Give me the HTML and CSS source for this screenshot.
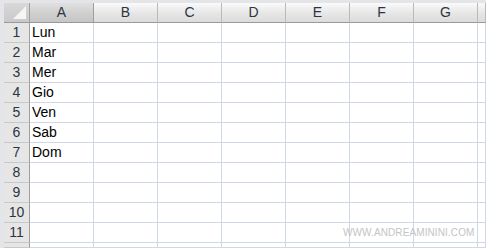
FILE: index.html
```html
<!DOCTYPE html>
<html lang="en">
<head>
  <meta charset="UTF-8">
  <title>Foglio</title>
  <link rel="stylesheet" href="styles.css">
</head>
<body>
  <div class="sheet">
    <!-- header row -->
    <div class="corner"><span class="corner-tri"></span></div>
    <div class="col-head selected">A</div>
    <div class="col-head">B</div>
    <div class="col-head">C</div>
    <div class="col-head">D</div>
    <div class="col-head">E</div>
    <div class="col-head">F</div>
    <div class="col-head">G</div>
    <div class="col-head"></div>

    <div class="row-head">1</div><div class="cell">Lun</div><div class="cell"></div><div class="cell"></div><div class="cell"></div><div class="cell"></div><div class="cell"></div><div class="cell"></div><div class="cell"></div>
    <div class="row-head">2</div><div class="cell">Mar</div><div class="cell"></div><div class="cell"></div><div class="cell"></div><div class="cell"></div><div class="cell"></div><div class="cell"></div><div class="cell"></div>
    <div class="row-head">3</div><div class="cell">Mer</div><div class="cell"></div><div class="cell"></div><div class="cell"></div><div class="cell"></div><div class="cell"></div><div class="cell"></div><div class="cell"></div>
    <div class="row-head">4</div><div class="cell">Gio</div><div class="cell"></div><div class="cell"></div><div class="cell"></div><div class="cell"></div><div class="cell"></div><div class="cell"></div><div class="cell"></div>
    <div class="row-head">5</div><div class="cell">Ven</div><div class="cell"></div><div class="cell"></div><div class="cell"></div><div class="cell"></div><div class="cell"></div><div class="cell"></div><div class="cell"></div>
    <div class="row-head">6</div><div class="cell">Sab</div><div class="cell"></div><div class="cell"></div><div class="cell"></div><div class="cell"></div><div class="cell"></div><div class="cell"></div><div class="cell"></div>
    <div class="row-head">7</div><div class="cell">Dom</div><div class="cell"></div><div class="cell"></div><div class="cell"></div><div class="cell"></div><div class="cell"></div><div class="cell"></div><div class="cell"></div>
    <div class="row-head">8</div><div class="cell"></div><div class="cell"></div><div class="cell"></div><div class="cell"></div><div class="cell"></div><div class="cell"></div><div class="cell"></div><div class="cell"></div>
    <div class="row-head">9</div><div class="cell"></div><div class="cell"></div><div class="cell"></div><div class="cell"></div><div class="cell"></div><div class="cell"></div><div class="cell"></div><div class="cell"></div>
    <div class="row-head">10</div><div class="cell"></div><div class="cell"></div><div class="cell"></div><div class="cell"></div><div class="cell"></div><div class="cell"></div><div class="cell"></div><div class="cell"></div>
    <div class="row-head">11</div><div class="cell"></div><div class="cell"></div><div class="cell"></div><div class="cell"></div><div class="cell"></div><div class="cell"></div><div class="cell"></div><div class="cell"></div>
    <div class="row-head"></div><div class="cell"></div><div class="cell"></div><div class="cell"></div><div class="cell"></div><div class="cell"></div><div class="cell"></div><div class="cell"></div><div class="cell"></div>
  </div>

  <div class="watermark">WWW.ANDREAMININI.COM</div>
</body>
</html>
```

FILE: styles.css
```css
body {
  margin: 0;
  padding: 3px 0 0 4px;
  width: 486px;
  height: 248px;
  box-sizing: border-box;
  overflow: hidden;
  background-color: #e3e5e9;
  font-family: 'Liberation Sans', Arial, sans-serif;
  position: relative;
}

.sheet {
  display: grid;
  grid-template-columns: 26px repeat(7, 64px) 1fr;
  grid-template-rows: repeat(12, 20px) 5px;
  height: 245px;
  overflow: hidden;
  background-color: #ffffff;
}

.sheet > div {
  box-sizing: border-box;
}

.corner {
  position: relative;
  background: linear-gradient(#d8d8d8, #c9c9c9);
  border-right: 1px solid #a0a0a0;
  border-bottom: 1px solid #9a9a9a;
}

.corner-tri {
  position: absolute;
  right: 3px;
  bottom: 3px;
  width: 0;
  height: 0;
  border-left: 13px solid transparent;
  border-bottom: 13px solid #f6f6f6;
}

.col-head {
  background: linear-gradient(#fafafa, #e6e6e6 55%, #dcdcdc);
  border-right: 1px solid #b9b9b9;
  border-bottom: 1px solid #9a9a9a;
  color: #2d3440;
  font-size: 14px;
  line-height: 19px;
  text-align: center;
}

.col-head.selected {
  background: linear-gradient(#e0e0e0, #cfcfcf 55%, #c6c6c6);
  border-right: 1px solid #9e9e9e;
}

.row-head {
  background-color: #e6e6e6;
  border-right: 1px solid #9e9e9e;
  border-bottom: 1px solid #c8c8c8;
  color: #2d3440;
  font-size: 14px;
  line-height: 19px;
  text-align: center;
  overflow: hidden;
}

.cell {
  border-right: 1px solid #d0d7e5;
  border-bottom: 1px solid #d0d7e5;
  font-size: 14px;
  line-height: 19px;
  padding-left: 2px;
  color: #000;
  overflow: hidden;
}

.watermark {
  position: absolute;
  left: 343px;
  top: 227px;
  font-size: 10px;
  color: #c4c4c4;
  letter-spacing: 0.1px;
}
```
